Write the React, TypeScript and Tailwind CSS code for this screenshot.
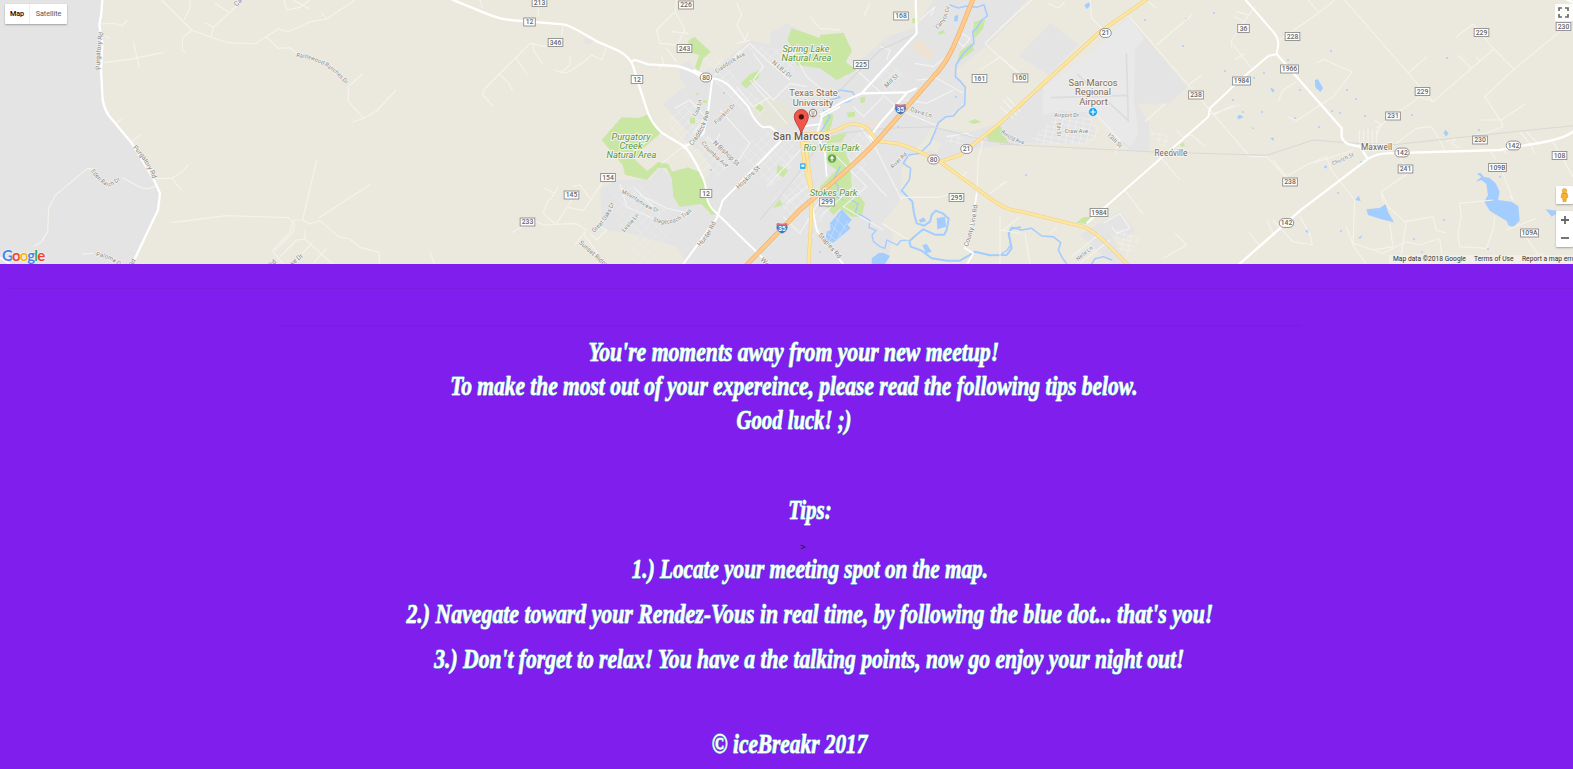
import { useLayoutEffect, useRef, useState, type ReactNode } from "react";

/* Map drawing: every tile is drawn at three units per pixel, shifted to its own left edge. */
function Tile({ x, children }: { x: number; children: ReactNode }) {
  return <g transform={`translate(${x} 0) scale(0.33333)`}>{children}</g>;
}

type Shield = [number, number, string];

const countyRoads: Shield[] = [
  [539.5, 2.5, "213"], [529.5, 22, "12"], [555.5, 42.5, "346"], [686, 5, "226"], [684.5, 48.5, "243"],
  [637, 79.5, "12"], [608, 177.5, "154"], [571.5, 195, "145"], [527.5, 222, "233"], [706, 193.5, "12"],
  [827, 202, "299"], [901, 16, "168"], [861, 64.5, "225"], [979.5, 78.5, "161"], [956.5, 197.5, "295"],
  [1020.5, 78, "160"], [1243.5, 28.5, "36"], [1292.5, 36.5, "228"], [1289.5, 69, "1966"], [1241.5, 81, "1984"],
  [1196, 95, "238"], [1290, 182, "238"], [1099, 212.5, "1984"], [1481.5, 32.5, "229"], [1563.5, 26.5, "230"],
  [1422.5, 91.5, "229"], [1393, 116, "231"], [1480, 140, "230"], [1405.5, 169, "241"], [1497.5, 167.5, "109B"],
  [1559.5, 155.5, "108"], [1529.5, 233, "109A"],
];
const stateRoads: Shield[] = [
  [706, 77.5, "80"], [966.5, 149, "21"], [933.5, 159.5, "80"], [1105.5, 33, "21"],
  [1402, 152.5, "142"], [1513.5, 145.5, "142"], [1286.5, 223, "142"],
];

function Shields() {
  return (
    <g fontFamily="Roboto, sans-serif" fontSize="6.8" fontWeight="500" textAnchor="middle" fill="#666">
      {countyRoads.map(([x, y, t], i) => {
        const w = t.length * 3.1 + 5.4;
        return (
          <g key={i}>
            <rect x={x - w / 2} y={y - 4} width={w} height="8" fill="#fff" stroke="#8d8d8d" strokeWidth="0.9" />
            <text x={x} y={y + 2.4}>{t}</text>
          </g>
        );
      })}
      {stateRoads.map(([x, y, t], i) => {
        const w = t.length * 3 + 5.4;
        return (
          <g key={i}>
            <rect x={x - w / 2} y={y - 4.4} width={w} height="8.8" rx="4.3" fill="#fff" stroke="#858585" strokeWidth="0.9" />
            <text x={x} y={y + 2.4}>{t}</text>
          </g>
        );
      })}
    </g>
  );
}

function Interstate({ x, y }: { x: number; y: number }) {
  return (
    <g transform={`translate(${x} ${y})`}>
      <path d="M-5 -5 Q0 -3.6 5 -5 Q7 0 4.5 3 Q2.5 5 0 6 Q-2.5 5 -4.5 3 Q-7 0 -5 -5Z" fill="#4478b8" stroke="#f4f4f4" strokeWidth=".6" />
      <path d="M-5 -5 Q0 -3.6 5 -5 L5.6 -2.6 H-5.6Z" fill="#d9737a" />
      <text y="3.2" textAnchor="middle" fontFamily="Roboto, sans-serif" fontSize="6.5" fontWeight="700" fill="#fff">35</text>
    </g>
  );
}

type Street = { d: string; t: string; x: number };

const streetNames: Street[] = [
  { x: 0, d: "M302 208 C296 175 304 130 311 92", t: "Purgatory Rd" },
  { x: 0, d: "M398 443 Q440 485 460 541", t: "Purgatory Rd" },
  { x: 0, d: "M889 170 C950 178 995 200 1042 259", t: "Rattlewood Ranches Dr" },
  { x: 0, d: "M272 513 Q300 552 325 560 Q345 556 366 536", t: "Eden Ranch Dr" },
  { x: 0, d: "M288 768 Q330 772 365 805", t: "Paloma Dr" },
  { x: 0, d: "M710 20 L758 -32", t: "Canyon" },
  { x: 0, d: "M398 800 L408 778", t: "Rd" },
  { x: 0, d: "M813 804 L832 786", t: "Rd" },
  { x: 0, d: "M877 797 L912 768", t: "se Dr" },
  { x: 400, d: "M664 580 C700 588 730 630 780 638", t: "Mountainview Dr" },
  { x: 400, d: "M758 662 Q820 690 880 630", t: "Stagecoach Trail" },
  { x: 400, d: "M582 698 Q632 655 643 604", t: "Great Oaks Dr" },
  { x: 400, d: "M673 697 L720 644", t: "Leslie Ln" },
  { x: 400, d: "M536 730 L622 806", t: "Sunset Ridge" },
  { x: 640, d: "M230 220 Q285 180 320 165", t: "Craddock Ave" },
  { x: 640, d: "M395 190 L453 238", t: "N LBJ Dr" },
  { x: 640, d: "M166 350 Q183 330 186 296", t: "Lisa Ln" },
  { x: 640, d: "M156 437 Q200 390 208 328", t: "Craddock Ave" },
  { x: 640, d: "M229 373 L290 315", t: "Franklin Dr" },
  { x: 640, d: "M218 430 L295 502", t: "N Bishop St" },
  { x: 640, d: "M183 430 Q220 475 264 506", t: "Columbia Ave" },
  { x: 640, d: "M296 568 L364 502", t: "Hopkins St" },
  { x: 640, d: "M180 740 Q215 705 229 664", t: "Hunter Rd" },
  { x: 640, d: "M534 706 L598 780", t: "Staples Rd" },
  { x: 640, d: "M360 780 L382 804", t: "Wo" },
  { x: 820, d: "M352 88 Q385 60 390 14", t: "Canyon Cir" },
  { x: 820, d: "M200 264 L238 227", t: "Mill St" },
  { x: 820, d: "M270 332 L337 355", t: "Davis Ln" },
  { x: 820, d: "M218 506 L264 462", t: "River Rd" },
  { x: 820, d: "M443 741 Q466 680 473 609", t: "County Line Rd" },
  { x: 1000, d: "M2 396 Q30 425 76 433", t: "Arnold Ave" },
  { x: 1000, d: "M163 350 L241 350", t: "Airport Dr" },
  { x: 1000, d: "M194 400 L268 400", t: "Craw Ave" },
  { x: 1000, d: "M170 368 L172 412", t: "5th St" },
  { x: 1000, d: "M320 406 L362 446", t: "13th St" },
  { x: 1000, d: "M234 783 L282 744", t: "Nelle Ln" },
  { x: 1273, d: "M180 496 L247 467", t: "Church St" },
];

/* A name that is stretched or tightened to run the whole length of its street. */
function StreetName({ id, street }: { id: string; street: Street }) {
  const path = useRef<SVGPathElement>(null);
  const text = useRef<SVGTextElement>(null);
  const [size, setSize] = useState(20);
  useLayoutEffect(() => {
    if (path.current && text.current) {
      const natural = measure(street.t);
      setSize(Math.min(21, (20 * (path.current.getTotalLength() - 1)) / natural));
    }
  }, [street]);
  return (
    <g transform={`translate(${street.x} 0) scale(0.33333)`}>
      <path ref={path} id={id} d={street.d} fill="none" />
      <text ref={text} fontSize={size} stroke="#f3f2ee" strokeWidth="4" paintOrder="stroke">
        <textPath href={`#${id}`}>{street.t}</textPath>
      </text>
    </g>
  );
}

function measure(t: string) {
  const ctx = document.createElement("canvas").getContext("2d");
  if (!ctx) return t.length * 11;
  ctx.font = "20px Roboto, sans-serif";
  return ctx.measureText(t).width * 1.04;
}

function StreetNames() {
  return (
    <g fontFamily="Roboto, sans-serif" fill="#858585" textRendering="geometricPrecision">
      {streetNames.map((s, i) => (
        <StreetName key={i} id={`street-${i}`} street={s} />
      ))}
    </g>
  );
}

const I35 = "M315 800 L480 630 C560 560 660 485 740 390 L880 230 C930 180 950 120 1000 -5";
const SR80 = "M480 404 L540 400 C600 400 610 370 640 372 C690 375 690 400 712 424 C770 428 790 430 880 475 L900 485 L1050 595 C1090 625 1110 630 1140 634 L1320 678 C1360 685 1400 730 1468 800";

const ponds = [
  [1145, 20], [1186, 19], [1214, 13], [1264, 73], [1243, 112], [1262, 112], [1254, 78],
  [1233, 100], [1295, 118], [1319, 127], [1332, 111], [1340, 113], [1365, 116], [1288, 60], [1331, 51],
  [1412, 115], [1447, 58], [1325, 167], [1338, 193], [1361, 162], [1307, 231], [1341, 231],
  [1414, 239], [1422, 252], [1444, 220], [1479, 130], [1026, 175], [1183, 46],
  [724, 93], [711, 170], [820, 252], [898, 127], [956, 97], [1500, 177], [1488, 249],
  [1225, 71], [1347, 90], [1356, 99], [1300, 90],
];

function MapDrawing() {
  return (
    <svg viewBox="0 0 1573 264" className="block h-full w-full" fill="none">
      <defs>
        <pattern id="streets" width="8" height="6.5" patternUnits="userSpaceOnUse" patternTransform="rotate(-45)">
          <path d="M0 0H8M0 0V6.5" stroke="#f2f2f2" strokeWidth="1" />
        </pattern>
        <pattern id="lanes" width="7" height="5" patternUnits="userSpaceOnUse" patternTransform="rotate(12)">
          <path d="M0 0H7M0 0V5" stroke="#f3f3f3" strokeWidth="1" />
        </pattern>
      </defs>
      <rect width="1573" height="264" fill="#ebe8dd" />

      <g fill="#e4e4e4">
        <Tile x={0}>
          <path d="M0 0H307L299 75L307 130L303 210L308 300Q312 330 345 370L400 437L462 540L480 580L474 630L400 792H0Z" />
        </Tile>
        <Tile x={640}>
          <path d="M70 310L140 262L120 235L120 195L145 182L175 215L230 200L330 120L390 135V100L440 70L480 90L630 200L680 165L740 110L830 80L880 0H1140L1140 40L1060 120L1000 170L945 210L975 260L975 310L930 345L885 370L850 420L820 460L785 500L782 600L725 670L760 700L745 792H300L140 792L110 740L-30 700L-110 690L-120 570L-70 540H30L60 500L170 600L215 500L180 450L130 425L140 400Z" />
        </Tile>
        <Tile x={820}>
          <path d="M350 385L450 395L540 370L680 340L760 260L830 400L790 430L600 430L440 450L380 480L320 460Z" />
        </Tile>
        <Tile x={1000}>
          <path d="M-60 0H85L0 60L-80 10ZM57 167L152 68L235 135L145 225L57 167ZM0 365L130 255L128 345L60 380L-20 410ZM235 190L385 50L435 110L560 260L510 310L412 312L447 370V450L390 452L350 410L280 340L185 330L130 345L130 255ZM240 705L360 632L405 690L370 720L330 700L385 792H340Z" />
        </Tile>
        <Tile x={400}>
          <path d="M550 115L580 120L570 135L552 128ZM790 310L880 240L900 250V430L850 380Z" />
        </Tile>
      </g>
      <Tile x={1000}>
        <path d="M237 185L388 52L433 115L405 150L402 300L415 400L392 440L345 408L282 338L185 332L130 345L128 262Z" fill="#e9e9e9" />
        <path d="M379 160L385 362L325 306M153 293L385 286M232 222L290 280" stroke="#dcdcdc" strokeWidth="5" />
      </Tile>
      <Tile x={820}>
        <path d="M285 120L300 120L345 160L330 180L280 150ZM130 365L180 362L185 376L135 378Z" fill="#eee3d2" />
        <path d="M320 410L365 430L350 460L305 440Z" fill="#ebe8dd" />
      </Tile>
      <Tile x={640}>
        <path d="M325 310L400 290L460 330L450 385L380 378L350 360Z" fill="#e6e5d9" />
      </Tile>

      <path d="M665 118L694 100L712 150L732 165L716 180L687 158ZM705 57L725 60L740 85L766 104L761 124L737 106L721 88L704 78ZM742 44L790 50L796 75L776 66ZM740 150L772 125L797 137L790 173L770 188L748 166ZM770 200L805 170L811 196L791 216Z" fill="url(#streets)" opacity=".85" />
      <path d="M832 160L864 128L880 145L848 190L834 187ZM805 215L826 207L820 238L806 240ZM876 80L890 64L907 76L890 95ZM844 66L860 69L843 82Z" fill="url(#streets)" opacity=".8" />
      <path d="M1031 139L1055 118L1090 117L1100 132L1090 144H1040ZM1150 131L1165 132L1172 145L1160 147ZM948 135L964 137L962 147L945 142ZM1115 228L1140 238L1130 256L1118 250Z" fill="url(#lanes)" />
      <path d="M611 187L640 183L655 200L668 210L640 230L618 226ZM625 240L660 215L668 235L650 264H630Z" fill="url(#streets)" opacity=".5" />

      <g fill="#c9e6a3">
        <Tile x={400}>
          <path d="M605 420L665 352L718 354L745 342L783 398L730 445L705 480L742 513L775 486L805 492L822 528L862 503L900 515V608L840 620L820 590L818 540L800 505L775 503L740 540L675 524L668 495Z" />
        </Tile>
        <Tile x={640}>
          <path d="M95 515L145 502L195 540L205 600L230 640L215 645L185 612L118 620L98 570ZM145 122L163 110L212 155L190 175L175 215L165 200L178 165L145 155ZM303 250L330 222L362 210L355 235L318 265ZM442 120L455 85L500 100L540 115L610 98L635 150L590 240L540 205L470 195L462 150ZM355 310L372 322L362 335L347 325ZM412 495L445 510L430 532L410 520ZM398 625L418 598L430 615ZM150 355L165 350L165 372L150 370ZM190 300L200 300L200 310L188 308ZM165 280L178 278L172 288Z" />
        </Tile>
        <Tile x={820}>
          <path d="M0 105L70 98L95 155L75 185L110 210L50 240L30 205L0 205ZM10 330L40 345L35 375L25 395L10 390ZM45 405L80 400L65 425L20 430L15 410ZM20 430L70 440L90 490L95 560L135 610L125 650L95 650L60 625L40 645L10 610L0 560L50 510L20 490ZM462 65L495 58L490 85L465 115L460 95ZM410 190L420 155L455 128L462 150ZM498 400L540 375L565 430L505 425ZM445 365L465 357L484 366L460 372ZM80 338L105 335L105 350L85 352ZM120 292L137 290L133 308L122 310ZM354 97L370 90L375 100L358 105ZM277 55L285 55L285 70L277 70Z" />
        </Tile>
        <Tile x={1000}>
          <path d="M0 380L25 430H0ZM228 668L250 652L272 650L260 672ZM540 434L550 427L555 438L543 441Z" />
        </Tile>
      </g>

      <g fill="#a3ccff">
        <Tile x={1273}>
          <path d="M608 545L625 530L612 522L622 518L632 530L650 534L668 550L680 575L675 600L715 605L736 618L740 662L722 680L708 678L700 662L650 632L634 605L645 585L640 552L625 540ZM280 628L320 624L338 613L345 636L363 667L325 658L285 645ZM247 600L257 587L263 603ZM818 628L850 632L848 642L836 650ZM126 240L135 238L150 265L142 276L127 262ZM512 398L517 390L527 400L519 410ZM255 714L268 705L262 716ZM153 500L162 496L160 506ZM98 690L107 688L106 698L99 697Z" />
        </Tile>
        <Tile x={820}>
          <path d="M65 628L95 660L82 674L92 685L40 728L15 720L20 695L32 690L30 670ZM155 775L175 760L190 758L210 768L195 792H155ZM296 660L312 652L318 664L302 668ZM350 655L375 650L378 680L352 688ZM307 735L320 732L335 755L318 760ZM404 48L415 44L412 65L402 62Z" />
          <path d="M45 650L80 690M32 672L66 710M20 698L50 722M62 640L28 722M84 662L50 722" stroke="#d5e3f3" strokeWidth="2" />
        </Tile>
        <Tile x={1000}>
          <path d="M253 15L268 6L270 18L260 27ZM711 350L720 344L730 352L716 358ZM810 262L824 270L818 278ZM811 414L822 413L819 422ZM755 382L762 384L760 389Z" />
        </Tile>
        {ponds.map(([x, y], i) => (
          <circle key={i} cx={x} cy={y} r="0.9" />
        ))}
      </g>
      <g stroke="#a3ccff" strokeLinejoin="round" strokeLinecap="round">
        <Tile x={820}>
          <path d="M390 15L415 24L440 18L470 22L492 14L502 48L485 60L470 85L458 95L462 130L430 160L408 195L406 230L422 245L436 262L434 315L415 330L400 348L378 350L355 368L345 395L330 430L300 460L265 465L250 490L272 505L268 540L245 572" strokeWidth="4.5" />
          <path d="M245 572L262 590L277 605L282 640L290 670L312 677L330 665L335 645L347 632L368 640L386 656L380 690L372 704L345 704L310 688L285 708L268 724L272 740L305 752L335 775L380 782L420 782L445 768L465 755L510 766L560 765L575 745L566 700L574 686L600 682" strokeWidth="6" />
          <path d="M95 600L114 612L105 640L128 648L150 662L147 682L168 692L156 705L160 724L180 740L195 745L200 720L232 735L242 722L265 720M0 345L30 325L60 310L85 305L105 290L98 276L60 270L45 282L60 292L30 300M0 400L30 350L10 330M60 500L40 540L55 560L48 590L70 600" strokeWidth="4" />
        </Tile>
        <Tile x={1000}>
          <path d="M0 765L22 750L32 735L26 700L35 682L65 690L95 685L125 708L160 710L182 728L175 750L186 772L200 792M275 792L285 776L310 770L335 780" strokeWidth="4.5" />
        </Tile>
      </g>

      {/* rural lanes */}
      <g stroke="#f5f3ec" strokeWidth="3.4" strokeLinejoin="round">
        <Tile x={0}>
          <path d="M485 0L575 90L633 112L680 127L765 132L798 110L835 86L865 96L930 65L980 57L1065 0M575 90L547 115V152L558 158M633 112L640 82L730 0M640 82L615 68M686 36L645 10M553 60L570 20V0M852 0L860 30L900 22L930 0M880 0L930 28M980 57L965 38M798 110L835 145L870 143L895 165M1045 260L1087 222M1045 260V305L1092 355L1055 367M1092 355L1130 333L1188 270M302 72L340 70L365 78L383 60M310 105L330 115M310 188L390 178L490 157M400 125L418 203M345 372L365 358M395 425L420 405M468 535H515L545 517L566 494M515 535L545 570M103 738L125 725L143 695L146 625L165 587L262 505L280 508M368 533L420 562Q450 572 470 555M245 762L280 760M0 775L30 792M515 668L680 647L865 653L878 665L868 700L817 752L850 792M878 660L908 660L930 672L960 662L1015 710L1048 717L1080 742L1138 757V792M908 660L951 476M957 653L1112 553M883 665L880 695L825 752M915 690V717L890 720L840 770M935 730L890 780M915 717L998 792M980 745L940 790" />
        </Tile>
        <Tile x={400}>
          <path d="M280 320L248 285L250 270L390 130L440 140M298 222L325 247L338 273M348 174L383 225M400 135V150L427 190M485 107L490 75M240 0L248 25M415 50V25M460 210L500 220L545 190L575 165L605 180L618 145M510 165V195L480 220M430 565L465 580L440 610L430 640L465 672H530L560 690L525 735M465 580L475 560M530 670L430 675L400 660L335 698M515 600L470 670M505 622L550 632L605 550M570 595L540 555L520 560M550 700L600 770M90 755L103 792M825 35L770 90L780 130L830 135L855 90L840 60L825 35L830 0M815 95L865 100M800 145L830 185M775 210L790 190L785 165M785 490L860 430M570 700L590 720L620 690L600 680" />
        </Tile>
        <Tile x={640}>
          <path d="M290 10L305 45L290 75L315 120L325 95M510 50L540 85L600 90M330 120L290 130M225 430L240 400" />
        </Tile>
        <Tile x={820}>
          <path d="M600 30L495 130L540 172L600 225M540 172L480 210M470 580L475 480L488 425M245 600L245 592H360L395 580M185 670L265 720M510 580L560 545M485 425L440 400L380 410M540 650V792M540 690L600 700M180 140L210 150L200 180M130 50L150 10M420 540L440 515M420 520L445 540" />
        </Tile>
        <Tile x={1000}>
          <path d="M0 85L95 0M270 0L275 55L310 88M388 50L565 255L625 325L750 470H800L860 535M470 135L575 45M440 0L470 25M0 170L65 225M145 10L175 25L195 5M565 255L605 225M695 140V120L765 20M700 50L735 65M710 35L745 45M700 135L755 205M705 180L735 160M435 365L495 312M530 390L545 410M625 345L720 315M640 345L700 315M485 475L540 540M375 572L430 643M745 695L780 738M800 662L825 710M525 700L560 735L490 775M0 555L20 545M75 700L90 792M150 700L170 680M10 690L60 650M550 410L575 405L615 440" />
        </Tile>
        <Tile x={1273}>
          <path d="M105 0L138 38L20 120M138 38L185 0M215 0L480 305L663 147L600 72L548 112M405 220L462 170M663 147L723 208L860 95M723 208L635 290L685 365L690 380L640 400L600 405M685 360L625 360M755 313L685 360M595 205L555 165M610 170L620 185M480 305L440 290L310 385M310 405L325 375L305 360M260 390V440M272 390V440M285 385V440M298 390V440M310 390V430M15 305L30 270L70 245M70 362L180 290L200 265L238 215L200 200L155 178L130 190M70 362L45 350M120 490L180 470L240 450M0 480L40 530L100 495L160 470L175 510L245 600L240 730L330 760L400 725L440 735M245 600L240 735L280 792M240 735L220 680M80 650L110 700L118 735L60 725L0 660M380 470L405 520L325 575L345 620L395 665L480 650L490 690L520 700M350 670L360 740L300 750M325 575L330 605M400 665L385 760L370 792M370 430L430 385L475 380L505 430L515 455M520 425L550 415L535 430L560 445M660 600L560 610L565 650L555 700L560 740L640 745L660 690L665 650M690 520L720 600L710 590M740 395L770 430L785 460M760 395L800 435M840 425L900 530M700 690L790 655M750 700L800 770M800 760L850 792M440 735L500 715L510 790M690 450L700 460M650 450L670 480" />
        </Tile>
      </g>
      <g stroke="#f3f3f3" strokeWidth="3.4">
        <Tile x={640}>
          <path d="M225 225L330 130L380 180L450 240M340 160L370 200L340 240L400 300L450 250L500 260M290 260L340 320L390 290M260 200L300 150M105 325L150 300L195 350L160 400M240 330L330 430L290 490L200 410M330 240L440 370M440 610L500 560L540 600L480 700L430 650M380 560L500 430M0 585L80 625L150 640M-20 560L60 640M450 140L500 230L560 280M-60 550L-40 620L50 660" />
        </Tile>
        <Tile x={820}>
          <path d="M110 210L195 290L240 330L345 375M290 240L350 235L430 280M260 300L320 310L400 270M190 290L130 350M50 470L140 560L70 620L190 690M165 440L245 600M120 500L200 590M165 440L120 380M285 190L340 200L380 170M300 60L345 20L330 50M0 650L100 560M130 350L100 320M425 100L450 115L430 140L410 120Z" />
        </Tile>
        <Tile x={1000}>
          <path d="M310 670L360 640L390 685L350 700L335 680M215 770L300 700M240 790L330 720M0 320L40 355M10 300L50 345M20 290L60 335M285 340L360 420L345 460" />
        </Tile>
      </g>

      {/* railways */}
      <g stroke="#d8d8d6" strokeWidth="3.2">
        <Tile x={820}><path d="M-180 660L-80 540L0 430L60 400L200 385L340 380L480 418L600 435" /></Tile>
        <Tile x={1000}><path d="M0 432L450 455L800 466L940 420L1040 428L1180 434L1400 410L1720 377" /></Tile>
        <Tile x={820}><path d="M60 270L180 150L290 100" /></Tile>
      </g>

      {/* white arterials */}
      <g stroke="#fff" strokeWidth="7" strokeLinejoin="round">
        <Tile x={0}>
          <path d="M307 0L304 40L298 75L307 130L303 210L308 300Q312 325 325 345L398 433L462 540L480 580L474 630L405 775L397 792" />
          <path d="M0 772L30 794" strokeWidth="5" />
        </Tile>
        <Tile x={400}>
          <path d="M155 -2L250 37Q300 58 330 60L490 73Q510 75 590 124L655 152Q690 170 700 200L720 265L745 342Q760 375 785 398L855 440Q880 470 900 515" />
          <path d="M693 185L705 180L745 193L830 198Q870 207 900 228" />
        </Tile>
        <Tile x={640}>
          <path d="M180 515Q200 550 200 590Q205 620 230 640L390 795M217 235Q250 240 270 260L325 320Q345 370 370 382L390 380L415 400L425 420L248 602L230 655L130 792M217 235L205 330L190 400L130 445" strokeWidth="6" />
          <path d="M180 228L217 235M160 210L195 225" strokeWidth="6" />
          <path d="M485 380L540 372L545 350L600 320M540 372L530 400L555 460L560 530M510 590L530 690L545 715L610 792" strokeWidth="5" />
        </Tile>
        <Tile x={820}>
          <path d="M287 0L290 100L125 280L60 310L0 345M125 280L262 277L290 265M175 430L150 410L180 370L260 280" strokeWidth="6.5" />
          <path d="M470 580L460 650L435 745L460 760L440 795" strokeWidth="5" />
        </Tile>
        <Tile x={1000}>
          <path d="M735 -2L815 90Q835 110 835 135L830 162L805 168L720 240L630 325L625 350L260 670" strokeWidth="6" />
          <path d="M830 162L1025 385V410Q1030 430 1055 435L1080 440L1102 475M715 795L900 632L1102 478Q1130 460 1160 460L1500 450L1580 435Q1690 420 1722 393" />
          <path d="M1700 -2L1725 10" />
        </Tile>
      </g>

      {/* yellow and orange routes */}
      <g strokeLinejoin="round">
        <Tile x={640}>
          {[["#f0d183", 11], ["#fde6a0", 7.5]].map(([c, w]) => (
            <g key={c} stroke={c as string} strokeWidth={w as number}>
              <path d={SR80} />
              <path d="M900 485L960 465L1080 370L1380 95L1525 -5" />
              <path d="M484 400Q485 430 495 500L515 580L512 680L505 800M505 425L500 460L518 590M484 405L520 402M484 430L510 428" />
            </g>
          ))}
          <path d={I35} stroke="#f0b06a" strokeWidth="14" />
          <path d={I35} stroke="#fccb8d" strokeWidth="10" />
        </Tile>
      </g>

      <StreetNames />
      <Shields />
      <Interstate x={900.5} y={109} />
      <Interstate x={782} y={228} />

      {/* places */}
      <g fontFamily="Roboto, sans-serif" textAnchor="middle" stroke="#f4f3ee" strokeWidth="2" paintOrder="stroke">
        <g fontSize="9.3" fontStyle="italic" fill="#5a9a3c">
          <text x="631" y="139.5">Purgatory</text>
          <text x="631" y="149">Creek</text>
          <text x="631.5" y="158">Natural Area</text>
          <text x="806" y="52">Spring Lake</text>
          <text x="806.5" y="61">Natural Area</text>
          <text x="831.5" y="151">Rio Vista Park</text>
          <text x="833.5" y="196">Stokes Park</text>
        </g>
        <g fontSize="9.3" fill="#85695a">
          <text x="813.5" y="96">Texas State</text>
          <text x="813" y="106">University</text>
          <text x="1093" y="86">San Marcos</text>
          <text x="1093" y="95">Regional</text>
          <text x="1093.5" y="104.5">Airport</text>
        </g>
        <text x="801.5" y="139.5" fontSize="10.5" fontWeight="500" fill="#6d5b50" textLength="57">San Marcos</text>
        <text x="1171" y="155.5" fontSize="8.3" fill="#7b6358" textLength="33">Reedville</text>
        <text x="1376.5" y="149.5" fontSize="8.5" fill="#6a6058" textLength="31">Maxwell</text>
      </g>

      {/* place symbols */}
      <circle cx="813" cy="113" r="3.6" fill="#fff" stroke="#a1887f" strokeWidth="1.2" />
      <path d="M811 112H815M811.3 113.8H814.7M812 115.2H814" stroke="#8d7468" strokeWidth=".8" />
      <circle cx="1093" cy="112" r="4.4" fill="#17a5f2" stroke="#fff" strokeWidth=".5" />
      <path d="M1093 109.3V114.8M1090.3 112H1095.7" stroke="#fff" strokeWidth="1.2" />
      <rect x="800" y="163.3" width="5.6" height="5.8" rx="1" fill="#3eb4ef" />
      <rect x="801.3" y="164.7" width="3" height="2" fill="#fff" />
      <circle cx="832" cy="158.5" r="4.3" fill="#5fa848" />
      <path d="M832 155.4L834.2 158.8H832.6V161.2H831.4V158.8H829.8Z" fill="#fff" />

      {/* marker */}
      <path d="M801.3 135C800.9 128 794.3 123 794.3 116.5A7 7 0 0 1 808.3 116.5C808.3 123 801.8 128 801.3 135Z" fill="#f1564b" stroke="#b63a32" strokeWidth=".9" />
      <circle cx="801.3" cy="116.8" r="2.6" fill="#4d0f0c" />
    </svg>
  );
}

function GoogleLogo() {
  return (
    <div className="absolute top-[245px] left-[2px] font-['Lato',sans-serif] text-[15px] leading-[20px] font-bold tracking-[-0.9px] [text-shadow:0_0_1px_#fff,0_0_2px_#fff]">
      <span className="text-[#4285f4]">G</span>
      <span className="text-[#ea4335]">o</span>
      <span className="text-[#f6b704]">o</span>
      <span className="text-[#4285f4]">g</span>
      <span className="text-[#34a853]">l</span>
      <span className="text-[#ea4335]">e</span>
    </div>
  );
}

function MapControls() {
  return (
    <>
      <div className="absolute top-1 left-[5px] flex h-5 rounded-[1px] bg-white font-['Roboto',sans-serif] text-[7.2px] leading-5 shadow-[0_1px_2px_rgba(0,0,0,0.3)]">
        <button className="w-[25px] border-r border-[#eee] text-center font-medium text-black">Map</button>
        <button className="w-[37px] text-center text-[#565656]">Satellite</button>
      </div>
      <button className="absolute top-1 right-0 flex h-[17px] w-[18px] items-center justify-center rounded-[1px] bg-white/90 pr-[2px]" aria-label="Fullscreen">
        <svg viewBox="0 0 11 11" className="h-[11px] w-[11px]" fill="none" stroke="#6a6a6a" strokeWidth="1.7">
          <path d="M1 4V1H4M7 1H10V4M10 7V10H7M4 10H1V7" />
        </svg>
      </button>
      <button className="absolute top-[186px] right-0 flex h-[18px] w-[17px] items-center justify-center rounded-[1px] bg-white shadow-[0_1px_2px_rgba(0,0,0,0.3)]" aria-label="Street View">
        <svg viewBox="0 0 9 14" className="h-[14px] w-[9px]">
          <path d="M2 5H7L8 9.3L6.5 9.5L6 13.5H3L2.5 9.5L1 9.3Z" fill="#f6b32b" stroke="#c98216" strokeWidth=".5" />
          <circle cx="4.5" cy="2.8" r="2.3" fill="#f9b92f" stroke="#c98216" strokeWidth=".4" />
        </svg>
      </button>
      <div className="absolute top-[211px] right-0 flex h-9 w-[17px] flex-col rounded-[1px] bg-white shadow-[0_1px_2px_rgba(0,0,0,0.3)]">
        <button className="flex flex-1 items-center justify-center" aria-label="Zoom in">
          <svg viewBox="0 0 8 8" className="size-2" stroke="#666" strokeWidth="1.8"><path d="M0 4H8M4 0V8" /></svg>
        </button>
        <button className="flex flex-1 items-center justify-center" aria-label="Zoom out">
          <svg viewBox="0 0 8 8" className="size-2" stroke="#666" strokeWidth="1.8"><path d="M0 4H8" /></svg>
        </button>
      </div>
      <div className="absolute right-0 bottom-0 flex h-[9px] w-[184px] gap-[8px] overflow-hidden bg-[#f1efe8] pl-[4px] font-['Roboto',sans-serif] text-[6.7px] leading-[9px] whitespace-nowrap text-[#333]">
        <span className="w-[73px] shrink-0">Map data ©2018 Google</span>
        <span className="w-[40px] shrink-0">Terms of Use</span>
        <span className="shrink-0">Report a map error</span>
      </div>
    </>
  );
}

const script =
  "block w-max whitespace-pre font-['Liberation_Serif',serif] text-[27px] font-bold italic leading-[34px] text-white [-webkit-text-stroke:0.5px_#fff] [text-shadow:-1px_0_0_rgba(32,178,170,0.65),1px_0_0_rgba(32,178,170,0.65),0_1px_0_rgba(32,178,170,0.65),0_-1px_0_rgba(32,178,170,0.5)]";

export default function App() {
  return (
    <div className="flex h-[769px] w-full flex-col overflow-hidden bg-[#801eee]">
      <div className="relative h-[264px] w-full shrink-0 overflow-hidden">
        <MapDrawing />
        <GoogleLogo />
        <MapControls />
      </div>
      <hr className="mt-6 ml-2 h-px shrink-0 border-0 bg-[#791ce2]" />
      <hr className="mt-9 ml-[281px] h-px w-[1020px] shrink-0 border-0 bg-[#791ce2]" />
      <section className="mt-[9px] flex w-[1588px] flex-col items-center">
        <h2 className={`${script} scale-x-[0.803]`}>You're moments away from your new meetup!</h2>
        <h2 className={`${script} scale-x-[0.794]`}>To make the most out of your expereince, please read the following tips below.</h2>
        <h2 className={`${script} scale-x-[0.766]`}>Good luck! ;)</h2>
      </section>
      <section className="mt-[56px] flex w-[1619px] flex-col items-center">
        <h2 className={`${script} scale-x-[0.774]`}>Tips:</h2>
        <span className="mt-[15px] mr-[13px] h-[10px] font-['Liberation_Sans',sans-serif] text-[9px] leading-[10px] text-[#221133]">&gt;</span>
        <ol className="flex flex-col items-center gap-[11px]">
          <li className={`${script} scale-x-[0.785]`}>1.) Locate your meeting spot on the map.</li>
          <li className={`${script} scale-x-[0.807]`}>2.) Navegate toward your Rendez-Vous in real time, by following the blue dot... that's you!</li>
          <li className={`${script} scale-x-[0.799]`}>3.) Don't forget to relax! You have a the talking points, now go enjoy your night out!</li>
        </ol>
      </section>
      <footer className="mt-[51px] flex w-[1580px] justify-center">
        <p className={`${script} scale-x-[0.789]`}>© iceBreakr 2017</p>
      </footer>
    </div>
  );
}
